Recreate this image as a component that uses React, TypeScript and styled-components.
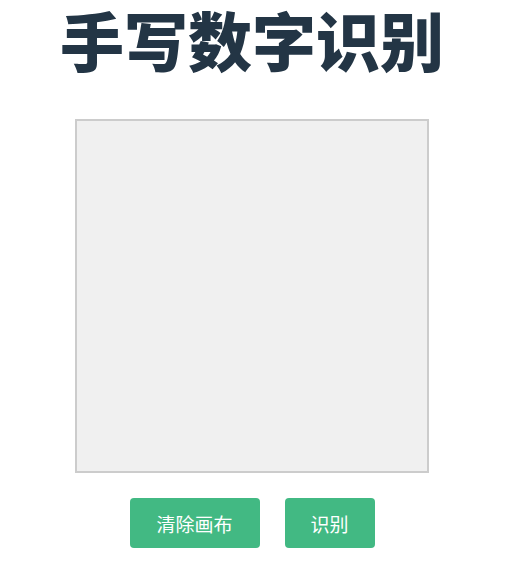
import React from "react";
import styled, { createGlobalStyle } from "styled-components";

const Global = createGlobalStyle`
  html, body { margin: 0; padding: 0; background: #ffffff; }
  body { font-family: "Noto Sans CJK SC", "Noto Sans", sans-serif; color: #2c3e50; }
`;

const Page = styled.div`
  display: flex;
  flex-direction: column;
  align-items: center;
  width: 504px;
`;

const Title = styled.h1`
  margin: 6px 0 0;
  font-size: 64px;
  line-height: 64px;
  font-weight: 900;
  color: #233545;
`;

const Board = styled.canvas`
  display: block;
  margin-top: 49px;
  width: 350px;
  height: 350px;
  border: 2px solid #cccccc;
  background: #f0f0f0;
`;

const Actions = styled.div`
  display: flex;
  gap: 25px;
  margin-top: 25px;
`;

const Button = styled.button<{ $w: number }>`
  width: ${(p) => p.$w}px;
  height: 50px;
  border: none;
  border-radius: 4px;
  background: #42b983;
  color: #ffffff;
  font-family: "Noto Sans CJK SC", sans-serif;
  font-size: 19px;
  cursor: pointer;
  padding: 0;
`;

export default function App() {
  return (
    <Page>
      <Global />
      <Title>手写数字识别</Title>
      <Board width={350} height={350} />
      <Actions>
        <Button $w={130}>清除画布</Button>
        <Button $w={90}>识别</Button>
      </Actions>
    </Page>
  );
}
